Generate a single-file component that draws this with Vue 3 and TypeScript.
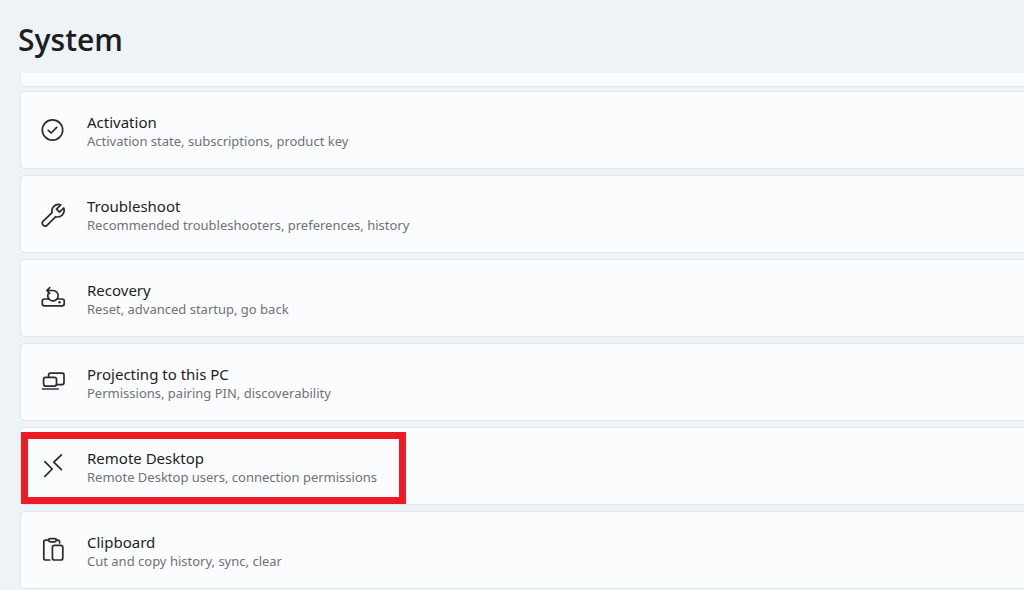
<script setup lang="ts">
type IconName = 'check' | 'wrench' | 'recovery' | 'project' | 'remote' | 'clipboard'

interface SettingItem {
  icon: IconName
  title: string
  description: string
  highlighted?: boolean
}

const items: SettingItem[] = [
  { icon: 'check', title: 'Activation', description: 'Activation state, subscriptions, product key' },
  { icon: 'wrench', title: 'Troubleshoot', description: 'Recommended troubleshooters, preferences, history' },
  { icon: 'recovery', title: 'Recovery', description: 'Reset, advanced startup, go back' },
  { icon: 'project', title: 'Projecting to this PC', description: 'Permissions, pairing PIN, discoverability' },
  { icon: 'remote', title: 'Remote Desktop', description: 'Remote Desktop users, connection permissions', highlighted: true },
  { icon: 'clipboard', title: 'Clipboard', description: 'Cut and copy history, sync, clear' },
]
</script>

<template>
  <main class="page">
    <h1 class="heading">System</h1>
    <div class="list">
      <div class="card-end"></div>
      <button v-for="item in items" :key="item.title" type="button" class="card">
        <svg class="icon" viewBox="0 0 26 26" aria-hidden="true">
          <g v-if="item.icon === 'check'">
            <circle cx="12.5" cy="13" r="10.2" />
            <path d="M8.3 13.3 11.2 16 16.7 10.4" />
          </g>
          <g v-else-if="item.icon === 'wrench'">
            <path d="M20.7 3.8A6.6 6.6 0 0 0 12.1 11.7L3.2 20.2A2.8 2.8 0 0 0 7.2 24.2L15.7 15.7A6.6 6.6 0 0 0 23.7 7L19.5 11.1 16.5 8.2Z" />
          </g>
          <g v-else-if="item.icon === 'recovery'">
            <path d="M8.4 14H4.3Q2.3 14 2.3 16V18.8Q2.3 20.8 4.3 20.8H22.2Q24.2 20.8 24.2 18.8V16Q24.2 14 22.2 14H17.8" />
            <path d="M8.2 8.6A5.2 5.2 0 1 0 13 5.5H7M9.7 2.6 6.8 5.5 9.7 8.4" />
            <circle class="solid" cx="19.5" cy="17.3" r="1.2" />
          </g>
          <g v-else-if="item.icon === 'project'">
            <path d="M8.6 8V6.1Q8.6 4.1 10.6 4.1H22Q24 4.1 24 6.1V13.6Q24 15.6 22 15.6H16.6" />
            <rect x="3.6" y="8.3" width="12.9" height="8.8" rx="2" />
            <path class="stand" d="M2.6 20.1H18" />
          </g>
          <g v-else-if="item.icon === 'remote'">
            <path d="M4.8 8.6 12.2 16 4.8 23.4M21.4 1.8 13.8 9.2 21.4 16.6" />
          </g>
          <g v-else>
            <path d="M8.6 3.2H5.6Q3.8 3.2 3.8 5V21.2Q3.8 23 5.6 23H9.8M16.4 3.2H17.8Q19.6 3.2 19.6 5V6" />
            <rect x="8.7" y="1.6" width="7.6" height="3.3" rx="1.6" />
            <rect x="12.4" y="8.4" width="10.4" height="14.6" rx="2" />
          </g>
        </svg>
        <span class="text">
          <span class="title">{{ item.title }}</span>
          <span class="description">{{ item.description }}</span>
        </span>
        <span v-if="item.highlighted" class="highlight"></span>
      </button>
    </div>
  </main>
</template>

<style>
body {
  background: #eef3f8;
  overflow: hidden;
}
</style>

<style scoped>
.page {
  display: flex;
  flex-direction: column;
  height: 100vh;
  overflow: hidden;
  box-sizing: border-box;
  padding-left: 20px;
  font-family: "Noto Sans", "Open Sans", sans-serif;
  color: #1d1e20;
}

.heading {
  flex: none;
  box-sizing: border-box;
  height: 73px;
  margin: 0 0 0 -2px;
  padding-top: 20px;
  font-family: "Open Sans", "Noto Sans", sans-serif;
  font-size: 30px;
  line-height: 40px;
  font-weight: 600;
}

.list {
  display: flex;
  flex-direction: column;
}

.card-end,
.card {
  flex: none;
  box-sizing: border-box;
  background: #fbfcfe;
  border: 1px solid #e2e6eb;
  border-right: 0;
}

.card-end {
  height: 14px;
  margin-bottom: 4px;
  border-top: 0;
  border-radius: 0 0 0 5px;
}

.card {
  position: relative;
  display: flex;
  align-items: center;
  gap: 21px;
  width: 100%;
  height: 78px;
  margin: 0 0 6px;
  padding: 0 0 0 19px;
  border-radius: 5px 0 0 5px;
  font: inherit;
  color: inherit;
  text-align: left;
}

.icon {
  flex: none;
  width: 26px;
  height: 26px;
  fill: none;
  stroke: #292a2c;
  stroke-width: 1.7;
  stroke-linecap: round;
  stroke-linejoin: round;
}

.solid {
  fill: #292a2c;
  stroke: none;
}

.stand {
  stroke: #66676a;
  stroke-width: 2;
}

.text {
  display: flex;
  flex-direction: column;
  padding-top: 2px;
}

.title {
  font-size: 15px;
  line-height: 20px;
}

.description {
  font-size: 13px;
  line-height: 18px;
  color: #707275;
}

.highlight {
  position: absolute;
  top: 4px;
  left: 0;
  box-sizing: border-box;
  width: 385px;
  height: 72px;
  border: 7px solid #ed1c24;
}
</style>
